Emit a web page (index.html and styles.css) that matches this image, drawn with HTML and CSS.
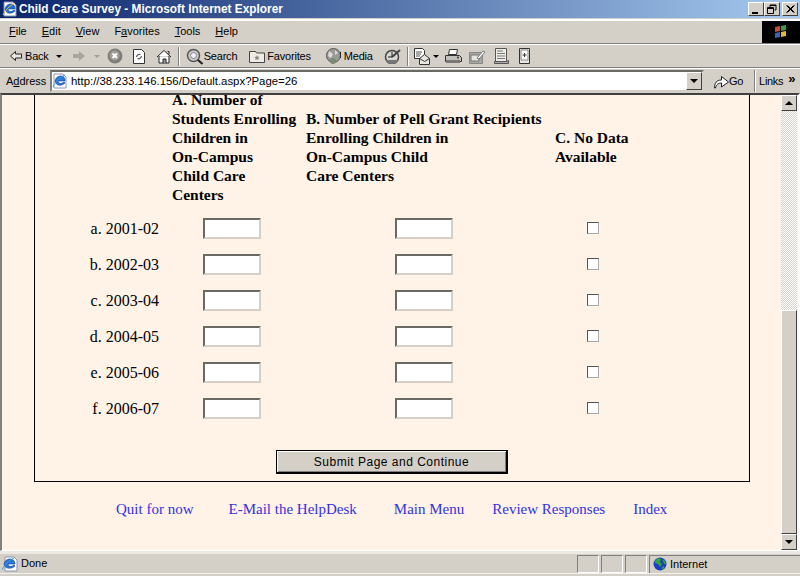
FILE: index.html
```html
<!DOCTYPE html>
<html lang="en">
<head>
<meta charset="utf-8">
<title>Child Care Survey - Microsoft Internet Explorer</title>
<link rel="stylesheet" href="styles.css">
</head>
<body>
<div class="window">
  <header class="titlebar">
    <svg class="ie-small" width="16" height="16" viewBox="0 0 16 16"><path d="M2 1h9l3 3v11H2z" fill="#fff" stroke="#7f8cb0"/><path d="M3 9c0-4 3-6 6-6 3 0 4 2 4 5H6c0 3 4 3 6 1l1 1c-3 3-8 3-9 0z" fill="#1f6fd0" stroke="#0c3c90" stroke-width=".6"/><path d="M1 14c1-3 6-9 12-12" fill="none" stroke="#e8c040"/></svg>
    <span class="title">Child Care Survey - Microsoft Internet Explorer</span>
    <span class="win-btns">
      <span class="win-btn"><svg width="12" height="11" viewBox="0 0 12 11"><path d="M2 8h6v2H2z"/></svg></span>
      <span class="win-btn"><svg width="12" height="11" viewBox="0 0 12 11"><path d="M4 1h6v5H8.500M4 1v2M4 1.500h6M1.500 3.500h6v6h-6zM1.500 4.500h6" fill="none" stroke="#000"/></svg></span>
      <span class="win-btn close"><svg width="12" height="11" viewBox="0 0 12 11"><path d="M2.500 1.500l7 7M3.500 1.500l7 7M9.500 1.500l-7 7M10.500 1.500l-7 7" stroke="#000" fill="none"/></svg></span>
    </span>
  </header>

  <div class="bar menubar">
    <nav class="menus">
      <span><u>F</u>ile</span><span><u>E</u>dit</span><span><u>V</u>iew</span><span>F<u>a</u>vorites</span><span><u>T</u>ools</span><span><u>H</u>elp</span>
    </nav>
    <div class="flag"><svg width="18" height="16" viewBox="0 0 18 16"><path d="M3 3l5-1v5l-5 1z" fill="#c84a3a"/><path d="M9 2l5-1v5l-5 1z" fill="#3c9a48"/><path d="M3 9l5-1v5l-5 1z" fill="#3a62b8"/><path d="M9 8l5-1v5l-5 1z" fill="#e0b838"/></svg></div>
  </div>

  <div class="bar toolbar">
    <svg class="tb back-ic" width="14" height="12" viewBox="0 0 14 12"><path d="M6.500 1.500L1.500 6l5 4.500V8h6V4h-6z" fill="#e8e8e0" stroke="#222"/></svg>
    <span class="tb-label back-label">Back</span>
    <span class="caret dark"></span>
    <svg class="tb fwd-ic" width="14" height="12" viewBox="0 0 14 12"><path d="M7 1l6 5-6 5V8H1V4h6z" fill="#a6a6a0"/></svg>
    <span class="caret light"></span>
    <svg class="tb stop" width="16" height="16" viewBox="0 0 16 16"><circle cx="8" cy="8" r="7.500" fill="#807e78"/><circle cx="7.500" cy="7.500" r="5" fill="#a09e98"/><path d="M5.500 5.500l4.500 4.500M10 5.500l-4.500 4.500" stroke="#fff" stroke-width="2"/></svg>
    <svg class="tb refresh" width="14" height="17" viewBox="0 0 14 17"><path d="M1.500 1.500h8l3 3v11h-11z" fill="#fff" stroke="#333"/><path d="M4.500 9a3 3 0 0 1 4-2.500M9.500 8a3 3 0 0 1-4 2.500" fill="none" stroke="#555" stroke-width="1.200"/></svg>
    <svg class="tb home" width="16" height="15" viewBox="0 0 16 15"><path d="M1 8l7-6.500L15 8M3 7v7h10V7" fill="#fff" stroke="#222"/><path d="M7 14v-4h3v4" fill="#999" stroke="#222"/><path d="M11.500 2.500h1.500v3" fill="none" stroke="#222"/></svg>
    <span class="sep"></span>
    <svg class="tb search-ic" width="18" height="17" viewBox="0 0 18 17"><circle cx="7.500" cy="7.500" r="6" fill="#c8ccc8" stroke="#555" stroke-width="1.500"/><circle cx="7.500" cy="7.500" r="3" fill="#eef" stroke="#888"/><path d="M12 12l4.500 4" stroke="#222" stroke-width="2.200"/></svg>
    <span class="tb-label search-label">Search</span>
    <svg class="tb fav-ic" width="16" height="14" viewBox="0 0 16 14"><path d="M.5 2.500h6l1 1.500h8v9.500H.5z" fill="#eeece4" stroke="#444"/><path d="M8 6l.8 1.800 1.900.2-1.400 1.300.4 1.900L8 10.300l-1.700 1 .4-1.900L5.300 8l1.900-.2z" fill="#8a8a84"/></svg>
    <span class="tb-label fav-label">Favorites</span>
    <svg class="tb media-ic" width="18" height="17" viewBox="0 0 18 17"><circle cx="7.500" cy="7.500" r="7" fill="#9a9a94" stroke="#555"/><path d="M3 3l4 3-2 4-3-2zM9 2l3 3-3 2z" fill="#ddd"/><circle cx="7" cy="13" r="3" fill="#7a8a74"/><path d="M14.500 4v6" stroke="#222"/></svg>
    <span class="tb-label media-label">Media</span>
    <svg class="tb hist-ic" width="17" height="16" viewBox="0 0 17 16"><circle cx="8" cy="9" r="6.500" fill="#d8d8d2" stroke="#444" stroke-width="1.500"/><path d="M8 9l8-7" stroke="#444" stroke-width="2"/><path d="M8 4v5H4" stroke="#222" fill="none"/><path d="M2 12a6.500 6.500 0 0 0 12 0z" fill="#777"/></svg>
    <span class="sep sep2"></span>
    <svg class="tb mail-ic" width="18" height="17" viewBox="0 0 18 17"><path d="M.5.500h8l2 2v8h-10z" fill="#fff" stroke="#333"/><path d="M2 4h6M2 6h5M2 8h4" stroke="#555"/><path d="M5.500 10.500l5-4 5 4v6h-10z" fill="#e8e8e0" stroke="#333"/><path d="M5.500 10.500l5 3 5-3" fill="none" stroke="#333"/></svg>
    <span class="caret mail-caret"></span>
    <svg class="tb print-ic" width="17" height="15" viewBox="0 0 17 15"><path d="M4.500.500h8l-1 5h-8z" fill="#fff" stroke="#333"/><path d="M.5 6.500h14l2 2v4h-16z" fill="#c0c0ba" stroke="#333"/><path d="M1 11h14v3H1z" fill="#777"/><circle cx="13" cy="8.500" r="1" fill="#333"/></svg>
    <svg class="tb edit-ic" width="17" height="15" viewBox="0 0 17 15"><path d="M.5 3.500h13v11H.5z" fill="#a8a8a2" stroke="#888"/><path d="M2 6h8v6H2z" fill="#e4e4de" stroke="#777"/><path d="M8 9l6-7 2 1-6 7z" fill="#fff" stroke="#777"/></svg>
    <svg class="tb disc-ic" width="16" height="16" viewBox="0 0 16 16"><path d="M1.500.500h11v13h-11z" fill="#eeeee8" stroke="#555"/><path d="M3 3h6M3 5.500h8M3 8h8M3 10.500h8" stroke="#777"/><path d="M.5 13.500h12l2-1v3H.5z" fill="#aaa" stroke="#555"/></svg>
    <svg class="tb msg-ic" width="11" height="16" viewBox="0 0 11 16"><path d="M.5.500h10v15H.5z" fill="#e8e8e2" stroke="#333"/><path d="M2 2h7v10H2z" fill="#fff" stroke="#888"/><path d="M5.500 5v4M3.500 7h4" stroke="#333"/></svg>
  </div>

  <div class="bar addressbar">
    <span class="addr-label">A<u>d</u>dress</span>
    <div class="addr-field">
      <svg class="addr-ie" width="16" height="16" viewBox="0 0 16 16"><path d="M2 1h9l3 3v11H2z" fill="#fff" stroke="#8a96b8"/><path d="M3 9c0-4 3-6 6-6 3 0 4 2 4 5H6c0 3 4 3 6 1l1 1c-3 3-8 3-9 0z" fill="#2a78d8" stroke="#0c3c90" stroke-width=".6"/><path d="M1 14c1-3 6-9 12-12" fill="none" stroke="#3a9ae0"/></svg>
      <span class="url">http://38.233.146.156/Default.aspx?Page=26</span>
      <span class="combo"><span class="arrow-down"></span></span>
    </div>
    <svg class="go-ic" width="18" height="17" viewBox="0 0 18 17"><path d="M1.500 15c0-5 2-8 7-8V3.500l7 5.500-7 5v-4c-3 0-5 1-6 5z" fill="#fff" stroke="#222"/></svg>
    <span class="go">Go</span>
    <span class="bar-sep"></span>
    <span class="links">Links</span>
    <span class="chev">&raquo;</span>
  </div>

  <div class="viewport">
    <main class="page">
      <section class="box">
        <div class="survey">
          <div class="hd-spacer"></div>
          <div class="hd">A. Number of<br>Students Enrolling<br>Children in<br>On-Campus<br>Child Care<br>Centers</div>
          <div class="hd">B. Number of Pell Grant Recipients<br>Enrolling Children in<br>On-Campus Child<br>Care Centers</div>
          <div class="hd">C. No Data<br>Available</div>

          <label class="yr">a. 2001-02</label><span class="cell-a"><input class="num" type="text"></span><span class="cell-b"><input class="num" type="text"></span><span class="cell-c"><input class="chk" type="checkbox"></span>
          <label class="yr">b. 2002-03</label><span class="cell-a"><input class="num" type="text"></span><span class="cell-b"><input class="num" type="text"></span><span class="cell-c"><input class="chk" type="checkbox"></span>
          <label class="yr">c. 2003-04</label><span class="cell-a"><input class="num" type="text"></span><span class="cell-b"><input class="num" type="text"></span><span class="cell-c"><input class="chk" type="checkbox"></span>
          <label class="yr">d. 2004-05</label><span class="cell-a"><input class="num" type="text"></span><span class="cell-b"><input class="num" type="text"></span><span class="cell-c"><input class="chk" type="checkbox"></span>
          <label class="yr">e. 2005-06</label><span class="cell-a"><input class="num" type="text"></span><span class="cell-b"><input class="num" type="text"></span><span class="cell-c"><input class="chk" type="checkbox"></span>
          <label class="yr">f. 2006-07</label><span class="cell-a"><input class="num" type="text"></span><span class="cell-b"><input class="num" type="text"></span><span class="cell-c"><input class="chk" type="checkbox"></span>
        </div>
        <div class="submit-row"><button class="submit" type="button">Submit Page and Continue</button></div>
      </section>
      <nav class="links-row">
        <a class="wide" href="#">Quit for now</a>
        <a class="wider" href="#">E-Mail the HelpDesk</a>
        <a href="#">Main Menu</a>
        <a href="#">Review Responses</a>
        <a href="#">Index</a>
      </nav>
    </main>
    <div class="scrollbar">
      <span class="sb-btn"><span class="arrow-up"></span></span>
      <span class="sb-track"></span>
      <span class="sb-thumb"></span>
      <span class="sb-btn"><span class="arrow-down"></span></span>
    </div>
  </div>

  <footer class="statusbar">
    <svg class="st-ie" width="16" height="16" viewBox="0 0 16 16"><path d="M3 1h9l3 3v11H3z" fill="#fff" stroke="#8a96b8"/><path d="M2 9c0-4 3-6 6-6 3 0 5 2 5 5H6c0 3 4 3 6 1l1 1c-3 3-9 3-10 0z" fill="#2a78d8" stroke="#0c3c90" stroke-width=".6"/><path d="M0 14c1-3 6-9 12-12" fill="none" stroke="#3a9ae0"/></svg>
    <span class="st-text">Done</span>
    <span class="st-cell"></span><span class="st-cell"></span><span class="st-cell"></span>
    <span class="st-zone">
      <svg width="14" height="14" viewBox="0 0 14 14"><circle cx="7" cy="7" r="6.500" fill="#1c3cc8"/><path d="M2 4l3-3 3 1-1 3 2 2-2 3-2-3-3-1zM9 2l3 2 1 3-2 0zM9 10l2-1 0 2-2 2z" fill="#2ea82e"/></svg>
      <span>Internet</span>
    </span>
  </footer>
</div>
</body>
</html>
```
FILE: styles.css
```css
* { box-sizing: border-box; }
html, body { margin: 0; padding: 0; }
body { width: 800px; height: 576px; overflow: hidden; background: #d4d0c8; }

.window {
  width: 800px; height: 576px;
  display: flex; flex-direction: column;
  font: 11px/13px "Liberation Sans", Arial, sans-serif;
  color: #000;
  background: #d4d0c8;
}

/* title bar */
.titlebar {
  height: 18px; flex: none;
  display: flex; align-items: center;
  padding: 0 2px;
  background: linear-gradient(90deg, #0a246a 0%, #a6caf0 100%);
  color: #fff;
}
.ie-small { flex: none; margin-right: 1px; }
.title { font-weight: 700; font-size: 11.85px; white-space: nowrap; }
.win-btns { margin-left: auto; display: flex; }
.win-btn {
  width: 16px; height: 14px;
  background: #d4d0c8;
  border: 1px solid; border-color: #fff #404040 #404040 #fff;
  display: flex; align-items: center; justify-content: center;
}
.win-btn.close { margin-left: 2px; }
.win-btn svg { flex: none; }

/* rows of the chrome */
.bar { flex: none; display: flex; align-items: center; border-top: 1px solid #fff; }
.menubar { height: 25px; border-top: 2px solid #fff; border-bottom: 1px solid #808080; padding: 0 0 0 9px; margin-top: 1px; }
.menus { display: flex; gap: 15px; padding-bottom: 2px; }
.flag {
  margin-left: auto; width: 38px; height: 22px; background: #000;
  display: flex; align-items: center; justify-content: center;
}

.toolbar { height: 24px; padding-left: 9px; border-bottom: 1px solid #808080; }
.tb { flex: none; }
.tb-label { white-space: nowrap; letter-spacing: -.2px; }
.back-label { margin-left: 2px; }
.caret { width: 0; height: 0; border-left: 3px solid transparent; border-right: 3px solid transparent; border-top: 3px solid #000; flex: none; }
.caret.dark { margin-left: 7px; }
.caret.light { border-top-color: #a0a09a; margin-left: 8px; }
.fwd-ic { margin-left: 10px; }
.stop { margin-left: 7px; }
.refresh { margin-left: 9px; }
.home { margin-left: 10px; }
.sep { width: 2px; height: 19px; border-left: 1px solid #808080; border-right: 1px solid #fff; margin-left: 6px; flex: none; }
.search-ic { margin-left: 6px; }
.fav-ic { margin-left: 12px; }
.fav-label { margin-left: 2px; }
.media-ic { margin-left: 15px; }
.hist-ic { margin-left: 11px; }
.mail-ic { margin-left: 5px; }
.mail-caret { margin-left: 1px; }
.print-ic { margin-left: 6px; }
.edit-ic { margin-left: 7px; }
.disc-ic { margin-left: 8px; }
.msg-ic { margin-left: 9px; }

.addressbar { height: 25px; padding-left: 6px; }
.addr-label { width: 44px; flex: none; }
.addr-field {
  width: 654px; height: 22px; flex: none;
  background: #fff;
  border: 2px solid; border-color: #6a6a64 #d4d0c8 #d4d0c8 #808080;
  display: flex; align-items: center;
}
.addr-ie { flex: none; }
.url { margin-left: 3px; font-size: 11.4px; white-space: nowrap; }
.combo {
  margin-left: auto; width: 16px; height: 18px; background: #d4d0c8;
  border: 1px solid; border-color: #fff #404040 #404040 #fff;
  display: flex; align-items: center; justify-content: center;
}
.arrow-down { width: 0; height: 0; border-left: 4px solid transparent; border-right: 4px solid transparent; border-top: 4px solid #000; }
.arrow-up { width: 0; height: 0; border-left: 4px solid transparent; border-right: 4px solid transparent; border-bottom: 4px solid #000; }
.go-ic { flex: none; margin-left: 9px; }
.go { margin-left: -2px; letter-spacing: -.3px; }
.bar-sep { width: 2px; height: 22px; border-left: 1px solid #808080; border-right: 1px solid #fff; margin-left: 11px; flex: none; }
.links { margin-left: 3px; letter-spacing: -.3px; }
.chev { margin-left: 5px; font-weight: 700; font-size: 13px; line-height: 13px; position: relative; top: -3px; }

/* page area */
.viewport {
  flex: none; height: 458px;
  display: flex;
  border-style: solid; border-color: #404040 #fff #fff #808080;
  border-width: 2px 2px 1px 2px;
  background: #fff2e6;
  overflow: hidden;
}
.page { width: 779px; flex: none; font: 16px/19px "Liberation Serif", "Times New Roman", serif; }
.box {
  width: 716px; margin: -38px 0 0 32px;
  border: 1px solid #000;
  padding: 26px 0 7px;
}
.survey {
  display: grid;
  grid-template-columns: 137px 134px 249px 1fr;
  grid-auto-rows: 36px;
  grid-template-rows: 126px;
  align-items: center;
}
.hd { font-weight: 700; font-size: 15.5px; white-space: nowrap; }
.yr { text-align: right; padding-right: 13px; }
.cell-a { padding-left: 31px; display: flex; }
.cell-b { padding-left: 89px; display: flex; }
.cell-c { padding-left: 32px; display: flex; }
.num {
  width: 58px; height: 21px; margin: 0; padding: 0;
  background: #fff;
  border: 2px solid; border-color: #6a6a64 #d4d0c8 #d4d0c8 #6a6a64;
  outline: none;
}
.chk {
  appearance: none; width: 12px; height: 12px; margin: 0;
  background: #fff;
  border: 1px solid; border-color: #555 #aaa #aaa #555;
}
.submit-row { display: flex; justify-content: center; padding-top: 24px; }
.submit {
  width: 232px; height: 24px; padding: 0;
  background: #d4d0c8;
  border-style: solid; border-color: #000; border-width: 1px 2px 2px 1px;
  box-shadow: inset 1px 1px #fff, inset -1px -1px #808080;
  font: 12px/14px "Liberation Sans", Arial, sans-serif;
  letter-spacing: .5px;
  color: #000;
}
.links-row { display: flex; margin: 18px 0 0 114px; gap: 28px; font-size: 15px; }
.links-row a { color: #3333dd; text-decoration: none; white-space: nowrap; }
.links-row .wide { margin-right: 7px; }
.links-row .wider { margin-right: 9px; }

.scrollbar { width: 16px; flex: none; display: flex; flex-direction: column; }
.sb-btn {
  height: 16px; flex: none; background: #d4d0c8;
  border: 1px solid; border-color: #fff #404040 #404040 #fff;
  display: flex; align-items: center; justify-content: center;
}
.sb-track {
  height: 199px; flex: none;
  background-color: #fff;
  background-image: conic-gradient(#d4d0c8 25%, #fff 0 50%, #d4d0c8 0 75%, #fff 0);
  background-size: 2px 2px;
}
.sb-thumb {
  flex: 1; background: #d4d0c8;
  border: 1px solid; border-color: #fff #404040 #404040 #fff;
}

/* status bar */
.statusbar {
  flex: 1; display: flex; align-items: center;
  padding: 0 0 3px 2px;
  border-top: 3px solid #ece9e2;
  box-shadow: inset 0 -2px #d4d0c8, inset 0 -3px #f4f2ee;
}
.st-ie { flex: none; }
.st-text { margin-left: 3px; width: 556px; flex: none; }
.st-cell {
  width: 22px; height: 18px; margin-right: 2px; flex: none;
  border: 1px solid; border-color: #808080 #fff #fff #808080;
}
.st-zone {
  flex: 1; height: 18px; display: flex; align-items: center; gap: 3px; padding-left: 3px;
  border-left: 1px solid #808080; border-top: 1px solid #808080;
}
```
